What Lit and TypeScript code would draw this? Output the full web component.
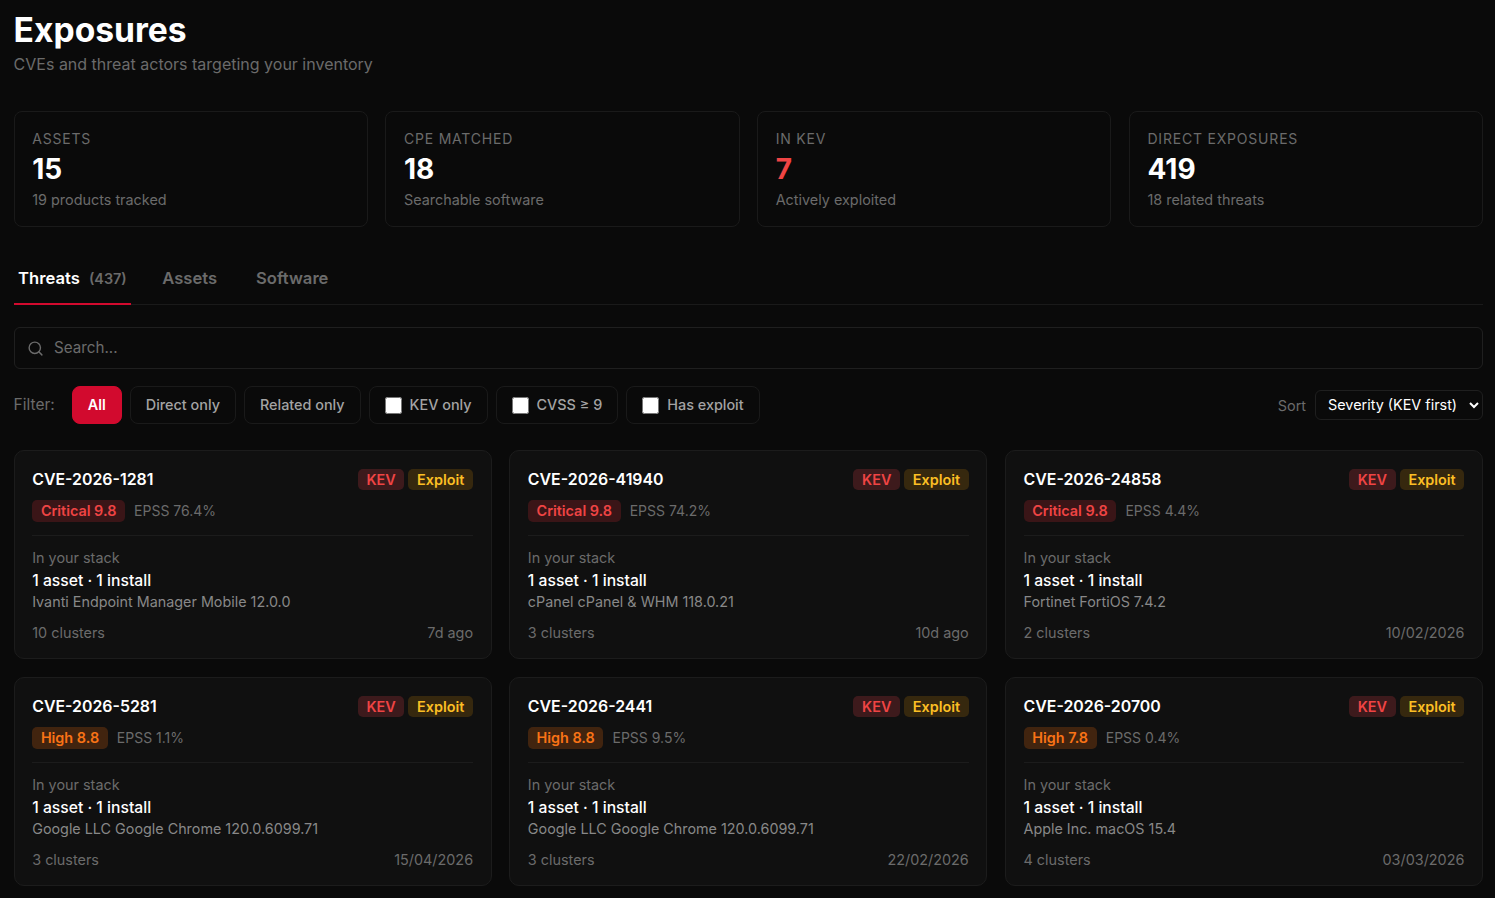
import { LitElement, html, css } from "lit";
import { customElement } from "lit/decorators.js";

const stats = [
  { label: "Assets", value: "15", sub: "19 products tracked" },
  { label: "CPE matched", value: "18", sub: "Searchable software" },
  { label: "In KEV", value: "7", sub: "Actively exploited", red: true },
  { label: "Direct exposures", value: "419", sub: "18 related threats" },
];

const threats = [
  { id: "CVE-2026-1281", sev: "Critical 9.8", level: "crit", epss: "76.4%", product: "Ivanti Endpoint Manager Mobile 12.0.0", clusters: 10, when: "7d ago" },
  { id: "CVE-2026-41940", sev: "Critical 9.8", level: "crit", epss: "74.2%", product: "cPanel cPanel & WHM 118.0.21", clusters: 3, when: "10d ago" },
  { id: "CVE-2026-24858", sev: "Critical 9.8", level: "crit", epss: "4.4%", product: "Fortinet FortiOS 7.4.2", clusters: 2, when: "10/02/2026" },
  { id: "CVE-2026-5281", sev: "High 8.8", level: "high", epss: "1.1%", product: "Google LLC Google Chrome 120.0.6099.71", clusters: 3, when: "15/04/2026" },
  { id: "CVE-2026-2441", sev: "High 8.8", level: "high", epss: "9.5%", product: "Google LLC Google Chrome 120.0.6099.71", clusters: 3, when: "22/02/2026" },
  { id: "CVE-2026-20700", sev: "High 7.8", level: "high", epss: "0.4%", product: "Apple Inc. macOS 15.4", clusters: 4, when: "03/03/2026" },
];

@customElement("app-root")
export class AppRoot extends LitElement {
  static styles = css`
    :host {
      display: block;
      height: 898px;
      overflow: hidden;
      background: #0a0a0a;
      color: #fff;
      font-family: Inter, "Liberation Sans", sans-serif;
      box-sizing: border-box;
      padding: 8px 12px 0 13.6px;
    }
    * {
      box-sizing: border-box;
    }
    h1 {
      margin: 0;
      font-size: 33.6px;
      line-height: 44px;
      font-weight: 700;
    }
    .subtitle {
      margin: 2px 0 0;
      font-size: 16px;
      line-height: 20px;
      color: #6b6b6b;
    }
    .stats {
      display: grid;
      grid-template-columns: repeat(4, 1fr);
      gap: 17.6px;
      margin-top: 37px;
    }
    .stat {
      height: 116px;
      padding: 17px 17.6px;
      background: #0a0a0a;
      border: 1px solid #1a1a1a;
      border-radius: 8px;
    }
    .stat-label {
      font-size: 14px;
      line-height: 20px;
      letter-spacing: 0.8px;
      text-transform: uppercase;
      color: #6b6b6b;
    }
    .stat-value {
      font-size: 28px;
      line-height: 34px;
      font-weight: 700;
      margin-top: 3px;
    }
    .stat-value.red {
      color: #ef4444;
    }
    .stat-sub {
      font-size: 14.4px;
      line-height: 20px;
      color: #6b6b6b;
      margin-top: 4px;
    }
    .tabs {
      display: flex;
      margin-top: 26px;
      height: 52px;
      border-bottom: 1px solid #1a1a1a;
    }
    .tab {
      padding: 15px 8px 0 31px;
      height: 52px;
      font-size: 16.6px;
      line-height: 20px;
      font-weight: 600;
      color: #6b6b6b;
      white-space: nowrap;
    }
    .tab.active {
      padding: 15px 4.5px 0;
      color: #fff;
      border-bottom: 2px solid #d20a2e;
    }
    .count {
      margin-left: 5px;
      font-size: 14.4px;
      color: #6b6b6b;
    }
    .search {
      display: flex;
      align-items: center;
      gap: 10px;
      height: 42px;
      margin-top: 22px;
      padding: 0 12.5px 2px;
      border: 1px solid #1f1f1f;
      border-radius: 6px;
      font-size: 15.2px;
      color: #6b6b6b;
    }
    .search svg {
      width: 17px;
      height: 17px;
      flex: none;
      margin-top: 2px;
    }
    .filters {
      display: flex;
      align-items: center;
      gap: 8px;
      margin-top: 17px;
      height: 38px;
    }
    .filter-label {
      font-size: 15.5px;
      color: #6b6b6b;
      margin-right: 9px;
      padding-bottom: 1px;
    }
    .chip {
      display: flex;
      align-items: center;
      gap: 8px;
      height: 38px;
      padding: 0 15px 1px;
      border: 1px solid #1a1a1a;
      border-radius: 8px;
      font-size: 14.4px;
      font-weight: 500;
      color: #a3a3a3;
    }
    .chip.on {
      background: #d20a2e;
      border-color: #d20a2e;
      color: #fff;
      font-weight: 600;
    }
    .chip input {
      width: 17px;
      height: 17px;
      margin: 1px 0 0;
    }
    .sort {
      display: flex;
      align-items: center;
      gap: 9px;
      margin-left: auto;
      font-size: 14.4px;
      color: #6b6b6b;
    }
    select {
      color-scheme: dark;
      width: 168px;
      height: 30px;
      padding: 0 4px 1px 8px;
      background: #0a0a0a;
      color: #fff;
      border: 1px solid #1f1f1f;
      border-radius: 6px;
      font: 400 14.4px Inter, "Liberation Sans", sans-serif;
    }
    .grid {
      display: grid;
      grid-template-columns: repeat(3, 1fr);
      gap: 17.6px;
      margin-top: 26px;
    }
    .card {
      height: 209.4px;
      padding: 17.6px;
      background: #101010;
      border: 1px solid #1c1c1c;
      border-radius: 10px;
    }
    .head {
      display: flex;
      justify-content: space-between;
      align-items: center;
      height: 22px;
    }
    .cve {
      font-size: 15.9px;
      line-height: 20px;
      font-weight: 600;
    }
    .badges {
      display: flex;
      gap: 4px;
    }
    .badge {
      height: 21.6px;
      padding: 0 8.7px;
      border-radius: 5px;
      font-size: 14.4px;
      line-height: 21.6px;
      font-weight: 600;
      white-space: nowrap;
    }
    .kev {
      background: #3d1a1c;
      color: #ef4444;
    }
    .crit {
      background: #3a1517;
      color: #ef4444;
    }
    .exploit {
      background: #36280e;
      color: #fbbf24;
    }
    .high {
      background: #41240f;
      color: #f97316;
    }
    .meta {
      display: flex;
      align-items: center;
      gap: 9px;
      margin-top: 9.4px;
      font-size: 14px;
      color: #6b6b6b;
    }
    .stack {
      margin-top: 13.4px;
      padding-top: 12px;
      border-top: 1px solid #1c1c1c;
    }
    .stack-label {
      font-size: 14.4px;
      line-height: 20px;
      color: #6b6b6b;
    }
    .installs {
      font-size: 15.7px;
      line-height: 20px;
      font-weight: 500;
      margin-top: 3.5px;
    }
    .product {
      font-size: 14.35px;
      line-height: 20px;
      color: #888888;
      margin-top: 0.5px;
    }
    .foot {
      display: flex;
      justify-content: space-between;
      margin-top: 11px;
      font-size: 14.4px;
      line-height: 20px;
      color: #6b6b6b;
    }
  `;

  render() {
    return html`
      <h1>Exposures</h1>
      <p class="subtitle">CVEs and threat actors targeting your inventory</p>

      <div class="stats">
        ${stats.map(
          (s) => html`
            <div class="stat">
              <div class="stat-label">${s.label}</div>
              <div class="stat-value ${s.red ? "red" : ""}">${s.value}</div>
              <div class="stat-sub">${s.sub}</div>
            </div>
          `
        )}
      </div>

      <div class="tabs">
        <div class="tab active">Threats <span class="count">(437)</span></div>
        <div class="tab">Assets</div>
        <div class="tab">Software</div>
      </div>

      <div class="search">
        <svg viewBox="0 0 24 24" fill="none" stroke="#6b6b6b" stroke-width="2" stroke-linecap="round" stroke-linejoin="round">
          <circle cx="11" cy="11" r="8"></circle>
          <path d="m21 21-4.3-4.3"></path>
        </svg>
        Search...
      </div>

      <div class="filters">
        <span class="filter-label">Filter:</span>
        <div class="chip on">All</div>
        <div class="chip">Direct only</div>
        <div class="chip">Related only</div>
        <label class="chip"><input type="checkbox" />KEV only</label>
        <label class="chip"><input type="checkbox" />CVSS ≥ 9</label>
        <label class="chip"><input type="checkbox" />Has exploit</label>
        <div class="sort">
          Sort
          <select><option>Severity (KEV first)</option></select>
        </div>
      </div>

      <div class="grid">
        ${threats.map(
          (t) => html`
            <div class="card">
              <div class="head">
                <span class="cve">${t.id}</span>
                <span class="badges">
                  <span class="badge kev">KEV</span>
                  <span class="badge exploit">Exploit</span>
                </span>
              </div>
              <div class="meta">
                <span class="badge ${t.level}">${t.sev}</span>
                <span>EPSS ${t.epss}</span>
              </div>
              <div class="stack">
                <div class="stack-label">In your stack</div>
                <div class="installs">1 asset · 1 install</div>
                <div class="product">${t.product}</div>
              </div>
              <div class="foot">
                <span>${t.clusters} clusters</span>
                <span>${t.when}</span>
              </div>
            </div>
          `
        )}
      </div>
    `;
  }
}
